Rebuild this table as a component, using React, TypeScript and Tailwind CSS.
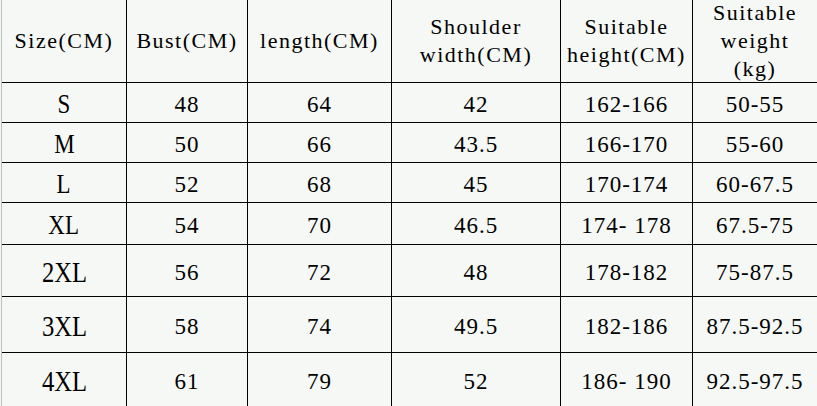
import React from "react";

const headers: string[][] = [
  ["Size(CM)"],
  ["Bust(CM)"],
  ["length(CM)"],
  ["Shoulder", "width(CM)"],
  ["Suitable", "height(CM)"],
  ["Suitable", "weight", "(kg)"],
];

const rows: { size: string; vals: string[]; h: string; big: boolean }[] = [
  { size: "S", vals: ["48", "64", "42", "162-166", "50-55"], h: "h-[40px]", big: false },
  { size: "M", vals: ["50", "66", "43.5", "166-170", "55-60"], h: "h-[40px]", big: false },
  { size: "L", vals: ["52", "68", "45", "170-174", "60-67.5"], h: "h-[40px]", big: false },
  { size: "XL", vals: ["54", "70", "46.5", "174- 178", "67.5-75"], h: "h-[42px]", big: false },
  { size: "2XL", vals: ["56", "72", "48", "178-182", "75-87.5"], h: "h-[52px]", big: true },
  { size: "3XL", vals: ["58", "74", "49.5", "182-186", "87.5-92.5"], h: "h-[56px]", big: true },
  { size: "4XL", vals: ["61", "79", "52", "186- 190", "92.5-97.5"], h: "h-[53px]", big: true },
];

const colW = ["w-[125px]", "w-[121px]", "w-[144px]", "w-[169px]", "w-[132px]", "flex-1"];

export default function App() {
  return (
    <div
      className="w-[817px] h-[406px] overflow-hidden bg-[#f6f8f5] text-black"
      style={{ fontFamily: '"Liberation Serif", "Times New Roman", serif' }}
    >
      <div className="ml-px h-full border-l border-[#bdbdbd] flex flex-col">
        <div className="flex h-[83px] border-b border-black">
          {headers.map((lines, i) => (
            <div
              key={i}
              className={`${colW[i]} ${i < 5 ? "border-r border-black" : ""} flex flex-col items-center justify-center text-[22px] leading-[28px] tracking-[1.5px] overflow-visible`}
            >
              {lines.map((l, j) => (
                <div key={j} className="whitespace-pre">
                  {l}
                </div>
              ))}
            </div>
          ))}
        </div>
        {rows.map((r, ri) => (
          <div
            key={r.size}
            className={`flex ${ri === rows.length - 1 ? "flex-1" : `${r.h} border-b border-black`}`}
          >
            <div className={`${colW[0]} border-r border-black flex items-center justify-center pt-[3px]`}>
              <span
                className={`inline-block scale-x-[0.82] ${r.big ? "text-[30px]" : "text-[28px]"} leading-none`}
              >
                {r.size}
              </span>
            </div>
            {r.vals.map((v, i) => (
              <div
                key={i}
                className={`${colW[i + 1]} ${i < 4 ? "border-r border-black" : ""} flex items-center justify-center pt-[3px]`}
              >
                <span className="whitespace-pre text-[23px] leading-none tracking-[1px]">{v}</span>
              </div>
            ))}
          </div>
        ))}
      </div>
    </div>
  );
}
